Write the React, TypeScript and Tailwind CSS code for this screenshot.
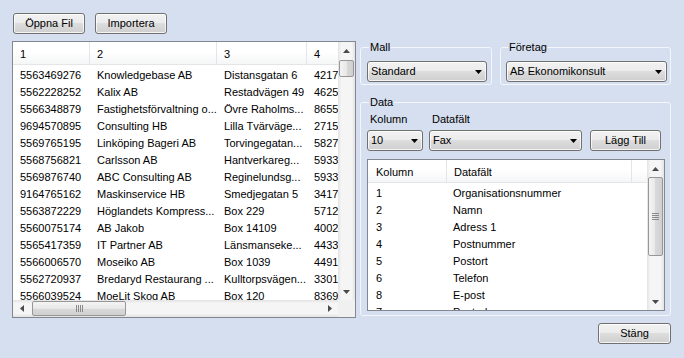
import React from "react";

const rows: string[][] = [
  ["5563469276", "Knowledgebase AB", "Distansgatan 6", "42170"],
  ["5562228252", "Kalix AB", "Restadvägen 49", "46250"],
  ["5566348879", "Fastighetsförvaltning o...", "Övre Raholms...", "86552"],
  ["9694570895", "Consulting HB", "Lilla Tvärväge...", "27150"],
  ["5569765195", "Linköping Bageri AB", "Torvingegatan...", "58273"],
  ["5568756821", "Carlsson AB", "Hantverkareg...", "59330"],
  ["5569876740", "ABC Consulting AB", "Reginelundsg...", "59332"],
  ["9164765162", "Maskinservice HB", "Smedjegatan 5", "34170"],
  ["5563872229", "Höglandets Kompress...", "Box 229", "57121"],
  ["5560075174", "AB Jakob", "Box 14109", "40021"],
  ["5565417359", "IT Partner AB", "Länsmanseke...", "44330"],
  ["5566006570", "Moseiko AB", "Box 1039", "44915"],
  ["5562720937", "Bredaryd Restaurang ...", "Kulltorpsvägen...", "33010"],
  ["5566039524", "MoeLit Skog AB", "Box 120", "83695"],
];

const fields: string[][] = [
  ["1", "Organisationsnummer"],
  ["2", "Namn"],
  ["3", "Adress 1"],
  ["4", "Postnummer"],
  ["5", "Postort"],
  ["6", "Telefon"],
  ["8", "E-post"],
  ["7", "Postadress"],
];

type Dir = "up" | "down" | "left" | "right";

function Arrow({ dir, color = "#4a4a4a" }: { dir: Dir; color?: string }) {
  const vertical = dir === "up" || dir === "down";
  const w = vertical ? 7 : 4;
  const h = vertical ? 4 : 7;
  const pts = {
    up: "0,4 3.5,0 7,4",
    down: "0,0 7,0 3.5,4",
    left: "4,0 4,7 0,3.5",
    right: "0,0 0,7 4,3.5",
  }[dir];
  return (
    <svg width={w} height={h} viewBox={`0 0 ${w} ${h}`}>
      <polygon points={pts} fill={color} />
    </svg>
  );
}

function WinButton({ label, className = "" }: { label: string; className?: string }) {
  return (
    <button
      type="button"
      className={`h-[21px] rounded-[3px] border border-[#707070] bg-[linear-gradient(#f2f2f2,#ebebeb_50%,#dddddd_50%,#cfcfcf)] text-[11px] leading-none text-black shadow-[inset_0_0_0_1px_rgba(255,255,255,0.75)] ${className}`}
    >
      {label}
    </button>
  );
}

function Combo({ value, className = "" }: { value: string; className?: string }) {
  return (
    <div
      className={`flex h-[21px] items-center justify-between rounded-[3px] border border-[#707070] bg-[linear-gradient(#f2f2f2,#ebebeb_50%,#dddddd_50%,#cfcfcf)] pl-[3px] pr-[4px] shadow-[inset_0_0_0_1px_rgba(255,255,255,0.75)] ${className}`}
    >
      <span>{value}</span>
      <Arrow dir="down" color="#000" />
    </div>
  );
}

function Grip({ vertical }: { vertical: boolean }) {
  const lines = [0, 1, 2, 3];
  return (
    <div className={`flex ${vertical ? "flex-col" : "flex-row"} gap-[1px]`}>
      {lines.map((i) => (
        <div
          key={i}
          className={vertical ? "h-[1px] w-[7px] bg-[#8a8a8a]" : "h-[7px] w-[1px] bg-[#8a8a8a]"}
        />
      ))}
    </div>
  );
}

function VScroll({ thumbTop, thumbH, grip }: { thumbTop: number; thumbH: number; grip?: boolean }) {
  return (
    <div className="flex h-full flex-col bg-[linear-gradient(to_right,#e3e3e3,#f5f5f5_20%,#f5f5f5_80%,#e3e3e3)]">
      <div className="flex h-[17px] shrink-0 items-center justify-center">
        <Arrow dir="up" />
      </div>
      <div className="flex-1">
        <div
          className="mx-[1px] flex items-center justify-center rounded-[2px] border border-[#979797] bg-[linear-gradient(to_right,#f4f4f4,#e8e8e8_50%,#d9d9d9_50%,#d0d0d0)]"
          style={{ marginTop: thumbTop, height: thumbH }}
        >
          {grip && <Grip vertical />}
        </div>
      </div>
      <div className="flex h-[17px] shrink-0 items-center justify-center">
        <Arrow dir="down" />
      </div>
    </div>
  );
}

function HScroll({ thumbLeft, thumbW }: { thumbLeft: number; thumbW: number }) {
  return (
    <div className="flex w-full bg-[linear-gradient(#e3e3e3,#f5f5f5_20%,#f5f5f5_80%,#e3e3e3)]">
      <div className="flex w-[17px] shrink-0 items-center justify-center">
        <Arrow dir="left" />
      </div>
      <div className="flex flex-1 items-center">
        <div
          className="my-[1px] flex h-[15px] items-center justify-center rounded-[2px] border border-[#979797] bg-[linear-gradient(#f4f4f4,#e8e8e8_50%,#d9d9d9_50%,#d0d0d0)]"
          style={{ marginLeft: thumbLeft, width: thumbW }}
        >
          <Grip vertical={false} />
        </div>
      </div>
      <div className="flex w-[17px] shrink-0 items-center justify-center">
        <Arrow dir="right" />
      </div>
    </div>
  );
}

function HeaderCell({ label, className = "" }: { label: string; className?: string }) {
  return (
    <div className={`h-full shrink-0 border-r border-[#e3e5e8] pl-[7px] pt-[6px] ${className}`}>
      {label}
    </div>
  );
}

function GroupBox({
  title,
  className = "",
  children,
}: {
  title: string;
  className?: string;
  children: React.ReactNode;
}) {
  return (
    <fieldset className={`rounded-[3px] border border-[#f3f6fb] ${className}`}>
      <legend className="ml-[2px] px-[1px] leading-[13px]">{title}</legend>
      {children}
    </fieldset>
  );
}

export default function App() {
  return (
    <div className="flex h-[358px] w-[684px] overflow-hidden bg-[#d6dfef] font-['Liberation_Sans',Arial,sans-serif] text-[11px] leading-[13px] text-black">
      {/* left side: buttons + imported table */}
      <div className="flex flex-col pl-[12px] pt-[13px]">
        <div className="flex gap-[10px] pl-[1px]">
          <WinButton label="Öppna Fil" className="w-[72px]" />
          <WinButton label="Importera" className="w-[72px]" />
        </div>

        <div className="mt-[7px] grid h-[277px] w-[344px] grid-cols-[1fr_17px] grid-rows-[1fr_17px] border border-[#828790] bg-white">
          <div className="overflow-hidden">
            <div className="flex h-[23px] border-b border-[#e5e5e5] bg-[linear-gradient(#ffffff,#ffffff_45%,#f5f6f7)]">
              <HeaderCell label="1" className="w-[77px]" />
              <HeaderCell label="2" className="w-[127px]" />
              <HeaderCell label="3" className="w-[90px]" />
              <HeaderCell label="4" className="w-[90px]" />
            </div>
            <div className="pt-[2px]">
              {rows.map((r) => (
                <div key={r[0]} className="flex h-[17px] items-center whitespace-nowrap">
                  <div className="w-[77px] shrink-0 pl-[7px]">{r[0]}</div>
                  <div className="w-[127px] shrink-0 overflow-hidden pl-[7px]">{r[1]}</div>
                  <div className="w-[90px] shrink-0 overflow-hidden pl-[7px]">{r[2]}</div>
                  <div className="w-[90px] shrink-0 pl-[7px]">{r[3]}</div>
                </div>
              ))}
            </div>
          </div>
          <VScroll thumbTop={1} thumbH={17} />
          <HScroll thumbLeft={2} thumbW={94} />
          <div className="bg-[#f0f0f0]" />
        </div>
      </div>

      {/* right side: settings */}
      <div className="ml-[4px] flex flex-col pt-[41px]">
        <div className="flex gap-[8px]">
          <GroupBox title="Mall" className="w-[132px] pb-[2px] pl-[6px]">
            <Combo value="Standard" className="mt-[7px] w-[120px]" />
          </GroupBox>
          <GroupBox title="Företag" className="w-[171px] pb-[2px] pl-[5px]">
            <Combo value="AB Ekonomikonsult" className="mt-[7px] w-[161px]" />
          </GroupBox>
        </div>

        <GroupBox title="Data" className="mt-[11px] w-[311px] pb-[4px] pl-[6px]">
          <div className="mt-[4px] flex items-end">
            <div className="flex flex-col">
              <span className="pl-[3px]">Kolumn</span>
              <Combo value="10" className="mt-[4px] w-[56px]" />
            </div>
            <div className="ml-[6px] flex flex-col">
              <span className="pl-[3px]">Datafält</span>
              <Combo value="Fax" className="mt-[4px] w-[153px]" />
            </div>
            <WinButton label="Lägg Till" className="ml-[8px] w-[71px]" />
          </div>

          <div className="mt-[8px] flex h-[152px] w-[298px] border border-[#828790] bg-white">
            <div className="flex-1 overflow-hidden">
              <div className="flex h-[23px] border-b border-[#e5e5e5] bg-[linear-gradient(#ffffff,#ffffff_45%,#f5f6f7)]">
                <HeaderCell label="Kolumn" className="w-[79px] pl-[8px]" />
                <HeaderCell label="Datafält" className="w-[185px] pl-[6px]" />
              </div>
              <div className="pt-[2px]">
                {fields.map((f) => (
                  <div key={f[0]} className="flex h-[17px] items-center whitespace-nowrap">
                    <div className="w-[79px] shrink-0 pl-[8px]">{f[0]}</div>
                    <div className="w-[185px] shrink-0 pl-[6px]">{f[1]}</div>
                  </div>
                ))}
              </div>
            </div>
            <div className="w-[17px]">
              <VScroll thumbTop={0} thumbH={79} grip />
            </div>
          </div>
        </GroupBox>

        <div className="mt-[7px] flex justify-end">
          <WinButton label="Stäng" className="w-[73px]" />
        </div>
      </div>
    </div>
  );
}
